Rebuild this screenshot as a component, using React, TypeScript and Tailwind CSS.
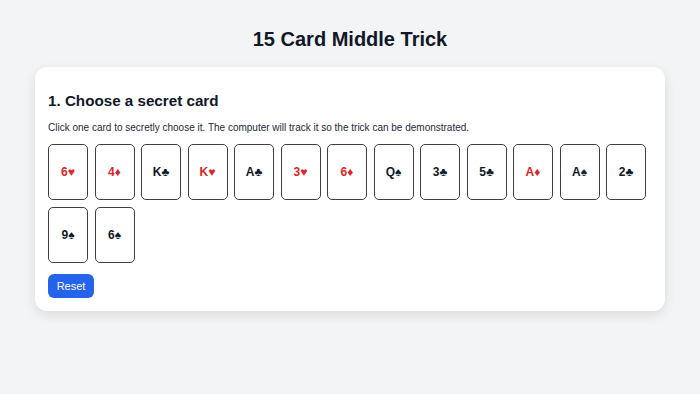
const cards = [
  { r: "6", s: "♥" },
  { r: "4", s: "♦" },
  { r: "K", s: "♣" },
  { r: "K", s: "♥" },
  { r: "A", s: "♣" },
  { r: "3", s: "♥" },
  { r: "6", s: "♦" },
  { r: "Q", s: "♠" },
  { r: "3", s: "♣" },
  { r: "5", s: "♣" },
  { r: "A", s: "♦" },
  { r: "A", s: "♠" },
  { r: "2", s: "♣" },
  { r: "9", s: "♠" },
  { r: "6", s: "♠" },
];

export default function App() {
  return (
    <div
      className="min-h-screen bg-[#f3f4f6] pt-[25px] text-[#111827]"
      style={{ fontFamily: '"Liberation Sans", Arial, sans-serif' }}
    >
      <h1 className="text-center text-[20px] leading-[28px] font-bold">15 Card Middle Trick</h1>
      <div className="mx-auto mt-[14px] w-[630px] rounded-xl bg-white px-[13px] pt-[13px] pb-[13px] shadow-[0_4px_12px_rgba(0,0,0,0.1)]">
        <h2 className="mt-[11px] text-[15.2px] leading-[20px] font-bold">1. Choose a secret card</h2>
        <p className="mt-[10px] text-[10px] leading-[14px] text-[#1f2937]">
          Click one card to secretly choose it. The computer will track it so the trick can be demonstrated.
        </p>
        <div className="mt-[9px] flex flex-wrap gap-x-[6.5px] gap-y-[7px]">
          {cards.map((c, i) => {
            const red = c.s === "♥" || c.s === "♦";
            return (
              <button
                key={i}
                className={`flex h-[56px] w-[40px] items-center justify-center rounded-[5px] border-[1.5px] border-[#3f3f3f] bg-white text-[12px] font-bold ${
                  red ? "text-[#dc2626]" : "text-[#111827]"
                }`}
              >
                {c.r}
                {c.s}
              </button>
            );
          })}
        </div>
        <button className="mt-[11px] h-[24px] w-[46px] rounded-md bg-[#2563eb] text-[11px] text-white">
          Reset
        </button>
      </div>
    </div>
  );
}
